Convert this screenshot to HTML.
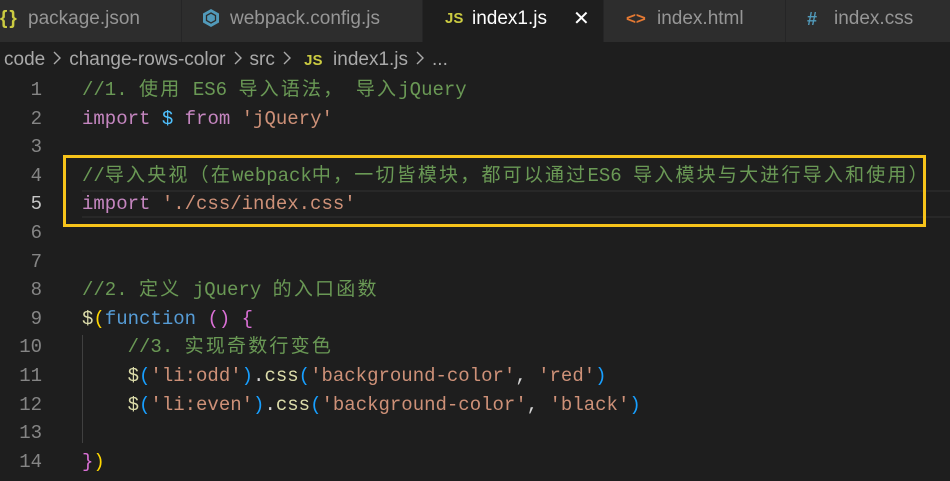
<!DOCTYPE html>
<html><head><meta charset="utf-8"><style>
*{margin:0;padding:0;box-sizing:border-box}
body{width:950px;height:481px;background:#1e1e1e;overflow:hidden;position:relative;font-family:"Liberation Sans","Noto Sans CJK SC",sans-serif}
.tabs{position:absolute;top:0;left:0;width:950px;height:42px;background:#252526}
.tab{position:absolute;top:0;height:42px;background:#2d2d2d;color:#969696;font-size:19px;line-height:38px;white-space:nowrap;border-right:1px solid #252526}
.tab.active{background:#1e1e1e;color:#fff}
.tab .ic{position:absolute;top:0;font-weight:bold}
.bc{position:absolute;top:46px;left:4px;color:#a9a9a9;font-size:19px;line-height:28px;white-space:nowrap}
.bc .s{display:inline-block;width:24px;height:16px;vertical-align:-1px}
.code{position:absolute;top:76px;left:0;width:950px;font-family:"Liberation Mono","Noto Sans CJK SC",monospace;font-size:19px}
.ln{height:28.6px;line-height:28.6px;position:relative;white-space:pre}
.num{position:absolute;left:0;width:42px;text-align:right;color:#858585}
.tx{position:absolute;left:82px}
.cm{color:#6a9955}.kw{color:#c586c0}.var{color:#4fc1ff}.st{color:#ce9178}.fn{color:#dcdcaa}.bl{color:#569cd6}
.b1{color:#ffd700}.b2{color:#da70d6}.b3{color:#179fff}.pl{color:#d4d4d4}
.cj{letter-spacing:2.2px}
.hl{position:absolute;left:82px;right:0;top:190px;height:28px;border-top:2px solid #282828;border-bottom:2px solid #282828}
.box{position:absolute;left:63px;top:155px;width:863px;height:72px;border:3px solid #f7c31a}
.guide{position:absolute;left:82px;top:335px;width:1px;height:108px;background:#404040}
</style></head><body>
<div class="tabs">
 <div class="tab" style="left:0;width:182px"><span class="ic" style="left:0;color:#cbcb41;letter-spacing:2px">{}</span><span style="position:absolute;left:28px">package.json</span></div>
 <div class="tab" style="left:182px;width:241px"><svg style="position:absolute;left:20px;top:8px" width="18" height="20" viewBox="0 0 18 20"><path d="M9 1 L17 5.5 V14.5 L9 19 L1 14.5 V5.5Z" fill="#519aba"/><path d="M9 5 L13.5 7.5 V12.5 L9 15 L4.5 12.5 V7.5Z" fill="none" stroke="#2d2d2d" stroke-width="1.3"/></svg><span style="position:absolute;left:48px">webpack.config.js</span></div>
 <div class="tab active" style="left:423px;width:181px"><span class="ic" style="left:22px;color:#cbcb41;font-size:15px">JS</span><span style="position:absolute;left:49px">index1.js</span><span style="position:absolute;left:150px;color:#fff;font-size:20px">✕</span></div>
 <div class="tab" style="left:604px;width:182px"><span class="ic" style="left:22px;color:#e37933;font-size:17px">&lt;&gt;</span><span style="position:absolute;left:53px">index.html</span></div>
 <div class="tab" style="left:786px;width:164px;border-right:none"><span class="ic" style="left:21px;color:#519aba;font-size:18px">#</span><span style="position:absolute;left:48px">index.css</span></div>
</div>
<div class="bc">code<svg class="s" viewBox="0 0 24 16"><polyline points="9,2 15,8 9,14" fill="none" stroke="#a9a9a9" stroke-width="1.4"/></svg>change-rows-color<svg class="s" viewBox="0 0 24 16"><polyline points="9,2 15,8 9,14" fill="none" stroke="#a9a9a9" stroke-width="1.4"/></svg>src<svg class="s" viewBox="0 0 24 16"><polyline points="9,2 15,8 9,14" fill="none" stroke="#a9a9a9" stroke-width="1.4"/></svg> <b style="color:#cbcb41;font-size:15px">JS</b>&nbsp; index1.js<svg class="s" viewBox="0 0 24 16"><polyline points="9,2 15,8 9,14" fill="none" stroke="#a9a9a9" stroke-width="1.4"/></svg>...</div>
<div class="hl"></div>
<div class="guide"></div>
<div class="code">
<div class="ln"><span class="num">1</span><span class="tx cm">//1. <span class="cj">使用</span> ES6 <span class="cj">导入语法，</span> <span class="cj">导入</span>jQuery</span></div>
<div class="ln"><span class="num">2</span><span class="tx"><span class="kw">import</span> <span class="var">$</span> <span class="kw">from</span> <span class="st">'jQuery'</span></span></div>
<div class="ln"><span class="num">3</span></div>
<div class="ln"><span class="num">4</span><span class="tx cm">//<span class="cj">导入央视（在</span>webpack<span class="cj">中，一切皆模块，都可以通过</span>ES6 <span class="cj">导入模块与大进行导入和使用）</span></span></div>
<div class="ln"><span class="num" style="color:#c6c6c6">5</span><span class="tx"><span class="kw">import</span> <span class="st">'./css/index.css'</span></span></div>
<div class="ln"><span class="num">6</span></div>
<div class="ln"><span class="num">7</span></div>
<div class="ln"><span class="num">8</span><span class="tx cm">//2. <span class="cj">定义</span> jQuery <span class="cj">的入口函数</span></span></div>
<div class="ln"><span class="num">9</span><span class="tx"><span class="fn">$</span><span class="b1">(</span><span class="bl">function</span> <span class="b2">()</span> <span class="b2">{</span></span></div>
<div class="ln"><span class="num">10</span><span class="tx cm">    //3. <span class="cj">实现奇数行变色</span></span></div>
<div class="ln"><span class="num">11</span><span class="tx">    <span class="fn">$</span><span class="b3">(</span><span class="st">'li:odd'</span><span class="b3">)</span><span class="pl">.</span><span class="fn">css</span><span class="b3">(</span><span class="st">'background-color'</span><span class="pl">, </span><span class="st">'red'</span><span class="b3">)</span></span></div>
<div class="ln"><span class="num">12</span><span class="tx">    <span class="fn">$</span><span class="b3">(</span><span class="st">'li:even'</span><span class="b3">)</span><span class="pl">.</span><span class="fn">css</span><span class="b3">(</span><span class="st">'background-color'</span><span class="pl">, </span><span class="st">'black'</span><span class="b3">)</span></span></div>
<div class="ln"><span class="num">13</span></div>
<div class="ln"><span class="num">14</span><span class="tx"><span class="b2">}</span><span class="b1">)</span></span></div>
</div>
<div class="box"></div>
</body></html>
